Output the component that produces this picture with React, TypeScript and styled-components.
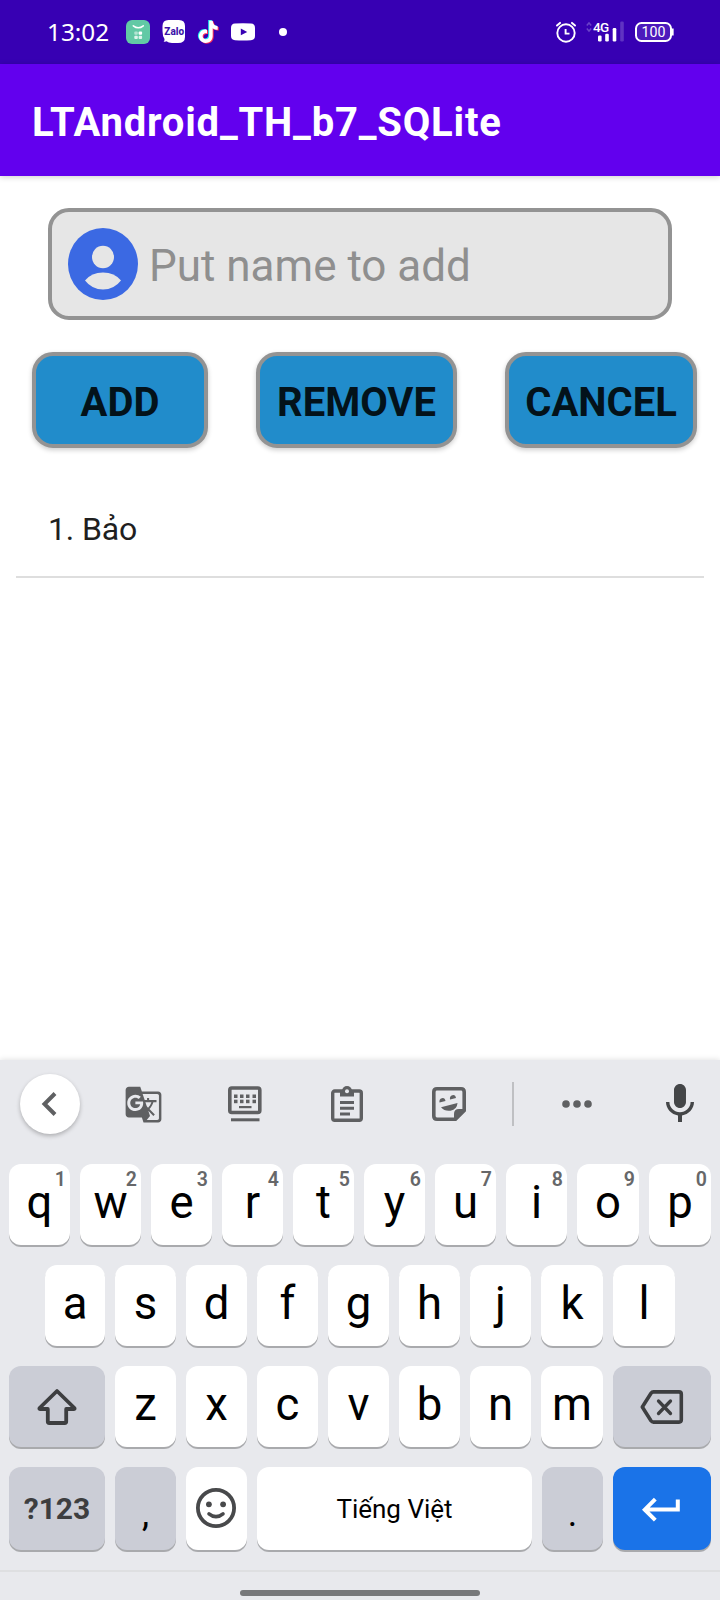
import React from "react";
import styled, { createGlobalStyle } from "styled-components";
import { MdGTranslate, MdMic } from "react-icons/md";

const GlobalStyle = createGlobalStyle`
  *, *::before, *::after { box-sizing: border-box; }
  body { margin: 0; background: #fff; font-family: Roboto, "Noto Sans", sans-serif; }
  button { font: inherit; border: 0; padding: 0; margin: 0; }
  svg { display: block; flex: none; overflow: visible; }
`;

const Screen = styled.div`
  width: 720px;
  height: 1600px;
  display: flex;
  flex-direction: column;
  background: #fff;
  overflow: hidden;
`;

/* ---------- status bar ---------- */

const StatusBar = styled.header`
  height: 64px;
  flex: none;
  display: flex;
  align-items: center;
  justify-content: space-between;
  padding: 0 45px 0 47px;
  background: #3700b3;
  color: #fff;
`;

const StatusGroup = styled.div`
  display: flex;
  align-items: center;
`;

const Clock = styled.span`
  width: 79px;
  font: 400 24.3px/32px "Noto Sans", sans-serif;
`;

const StatusItem = styled.span<{ $gap: number }>`
  margin-left: ${(p) => p.$gap}px;
`;

const StatusDot = styled.span`
  width: 8px;
  height: 8px;
  margin-left: 24px;
  border-radius: 50%;
  background: #fff;
`;

const Network = styled.span`
  display: flex;
  align-items: flex-start;
  width: 39px;
  height: 22px;
  margin-left: 10px;
`;

const NetworkLabel = styled.span`
  position: absolute;
  margin: -2px 0 0 7px;
  font: 500 13.5px/16px Roboto, sans-serif;
  letter-spacing: -0.7px;
`;

/* ---------- app bar ---------- */

const AppBar = styled.div`
  height: 112px;
  flex: none;
  display: flex;
  align-items: center;
  padding: 6px 32px 0;
  background: #6200ee;
  box-shadow: 0 1px 6px rgba(0, 0, 0, 0.2);
`;

const Title = styled.h1`
  margin: 0;
  color: #fff;
  font-size: 40px;
  font-weight: 700;
  line-height: 48px;
  letter-spacing: 0.79px;
`;

/* ---------- form ---------- */

const Content = styled.main`
  height: 884px;
  flex: none;
`;

const NameField = styled.label`
  height: 112px;
  margin: 32px 48px 0;
  display: flex;
  align-items: center;
  gap: 11px;
  padding: 0 16px;
  border: 4px solid #939393;
  border-radius: 21px;
  background: #e6e6e6;
`;

const Placeholder = styled.span`
  color: #8f8f8f;
  font-size: 44px;
  line-height: 52px;
  padding-top: 3px;
`;

const Actions = styled.div`
  display: flex;
  gap: 48px;
  padding: 32px 23px 0 32px;
`;

const ActionButton = styled.button<{ $width: number }>`
  width: ${(p) => p.$width}px;
  height: 96px;
  padding-top: 5px;
  border: 4px solid #939393;
  border-radius: 21px;
  background: #218ccb;
  color: #03121a;
  font-size: 40px;
  font-weight: 700;
  line-height: 48px;
  box-shadow: 0 2px 5px rgba(0, 0, 0, 0.2);
`;

const NameList = styled.ul`
  list-style: none;
  margin: 32px 16px 0;
  padding: 0;
`;

const NameItem = styled.li`
  height: 98px;
  padding: 0 32px;
  border-bottom: 2px solid #dedede;
  color: #1f1f1f;
  font-size: 32px;
  line-height: 98px;
  letter-spacing: -0.15px;
`;

/* ---------- keyboard ---------- */

const Keyboard = styled.section`
  flex: 1;
  background: #e8e9ed;
  box-shadow: 0 0 6px rgba(0, 0, 0, 0.14);
`;

const Toolbar = styled.div`
  height: 104px;
  display: flex;
  align-items: center;
  padding: 0 0 16px 20px;
  color: #5f6062;
`;

const BackCircle = styled.div`
  width: 60px;
  height: 60px;
  margin-right: 12px;
  display: grid;
  place-items: center;
  border-radius: 50%;
  background: #fff;
  box-shadow: 0 2px 4px rgba(0, 0, 0, 0.25);
`;

const ToolSlot = styled.div`
  width: 102px;
  display: grid;
  place-items: center;
`;

const ToolDivider = styled.div`
  width: 2px;
  height: 44px;
  margin: 0 12px;
  background: #bfc0c3;
`;

const MicSlot = styled.div`
  width: 80px;
  margin-left: 12px;
  display: grid;
  place-items: center;
  color: #444648;
`;

const KeyRow = styled.div<{ $indent?: number; $height?: number }>`
  display: flex;
  gap: 10px;
  height: ${(p) => p.$height ?? 101}px;
  padding-left: ${(p) => p.$indent ?? 9}px;
`;

const tones = {
  light: { bg: "#fff", fg: "#000" },
  dark: { bg: "#cbcdd6", fg: "#3d3e40" },
  accent: { bg: "#1a73e8", fg: "#fff" },
};

const KeyCap = styled.button<{ $width?: number; $height?: number; $tone?: keyof typeof tones }>`
  position: relative;
  flex: none;
  width: ${(p) => p.$width ?? 61}px;
  height: ${(p) => p.$height ?? 81}px;
  display: flex;
  justify-content: center;
  align-items: center;
  border-radius: 12px;
  background: ${(p) => tones[p.$tone ?? "light"].bg};
  color: ${(p) => tones[p.$tone ?? "light"].fg};
  box-shadow: 0 2px 0 #a9aaad;
`;

const Letter = styled.span`
  font-size: 45.5px;
  line-height: 54px;
  padding-bottom: 3px;
`;

const Hint = styled.span`
  position: absolute;
  top: 5px;
  right: 4px;
  color: #666769;
  font-size: 19.5px;
  font-weight: 600;
  line-height: 22px;
`;

const SymbolLabel = styled.span`
  font-size: 30px;
  font-weight: 700;
  line-height: 36px;
`;

const Punctuation = styled.span`
  color: #000;
  font-size: 36px;
  line-height: 42px;
  padding-top: 11px;
`;

const SpaceLabel = styled.span`
  font-size: 26px;
  line-height: 30px;
  padding-top: 1px;
`;

const EmojiSlot = styled.span`
  padding: 0 1px 2px 0;
`;

const NavigationBar = styled.footer`
  height: 30px;
  border-top: 2px solid #dedfe1;
  padding-top: 18px;
  display: flex;
  justify-content: center;
`;

const HomePill = styled.div`
  width: 240px;
  height: 6px;
  border-radius: 3px;
  background: #77787a;
`;

/* ---------- icons ---------- */

const ShopIcon = () => (
  <svg width="24" height="24" viewBox="0 0 24 24">
    <rect width="24" height="24" rx="6" fill="#62c9a5" />
    <path d="M7.300 5.800Q12.300 9.800 17.300 5.800" fill="none" stroke="#fff" strokeWidth="1.500" strokeLinecap="round" />
    <g fill="#fff">
      <rect x="8.300" y="11.500" width="3.500" height="3.200" rx="1" opacity=".5" />
      <rect x="12.600" y="11.500" width="3.500" height="3.200" rx="1" />
      <rect x="8.300" y="15.700" width="3.500" height="3.200" rx="1" opacity=".8" />
      <rect x="12.600" y="15.700" width="3.500" height="3.200" rx="1" opacity=".8" />
    </g>
  </svg>
);

const ZaloIcon = () => (
  <svg width="23" height="24" viewBox="0 0 23 24">
    <path
      d="M6.500 0H17Q23 0 23 6V17Q23 23 16 23H10Q6.500 23 4.500 21.300Q3.500 22 1.600 21.600Q2.800 20.500 2.500 19Q.5 16 .5 11V6Q.5 0 6.500 0Z"
      fill="#fff"
    />
    <text x="12.200" y="14.800" textAnchor="middle" fontFamily="Roboto, sans-serif" fontSize="10" fontWeight="800" fill="#3c14a8">
      Zalo
    </text>
  </svg>
);

const NOTE =
  "M12.500 1H16C16.300 4.300 18 6.300 21 6.600V10C19 10 17.400 9.500 16 8.500V16.300C16 24 6 25.500 3 19.800C.3 14.500 4.800 9 10.300 10V13.700C7.600 13 5.700 14.700 6 17C6.500 20.500 12.500 20.500 12.500 16Z";

const TikTokIcon = () => (
  <svg width="22" height="25" viewBox="0 0 22 25">
    <path d={NOTE} fill="#25f4ee" transform="translate(-1.300 -1)" />
    <path d={NOTE} fill="#fe2c55" transform="translate(.7 .4)" />
    <path d={NOTE} fill="#fff" transform="translate(-.3 -.3)" />
  </svg>
);

const VideoIcon = () => (
  <svg width="24" height="18" viewBox="0 0 24 18">
    <path d="M4 .6Q12 0 20 .6Q24 .8 24 5V13Q24 16.800 20 17.200Q12 17.800 4 17.200Q0 16.800 0 13V5Q0 .8 4 .6Z" fill="#fff" />
    <path d="M9.800 5.500V12.300L16.200 8.900Z" fill="#3700b3" />
  </svg>
);

const AlarmIcon = () => (
  <svg width="20" height="22" viewBox="0 0 20 22" fill="none" stroke="#fff">
    <circle cx="10" cy="12" r="8.700" strokeWidth="1.900" />
    <path d="M1 4.500L4 1.900M19 4.500L16 1.900" strokeWidth="2" strokeLinecap="round" />
    <path d="M9.600 8V12.600H13.500" strokeWidth="1.900" />
  </svg>
);

const SignalIcon = () => (
  <svg width="39" height="22" viewBox="0 0 39 22">
    <path d="M.8 4.500L3 2L5.200 4.500M.8 7.500L3 10L5.200 7.500" fill="none" stroke="#6a42c8" strokeWidth="1.500" />
    <g fill="#fff">
      <rect x="12" y="14.500" width="3.600" height="6" rx="1.200" />
      <rect x="19.200" y="12.800" width="3.600" height="7.700" rx="1.200" />
      <rect x="26.700" y="7" width="3.600" height="13.500" rx="1.200" />
      <rect x="34.200" y=".500" width="3.600" height="20" rx="1.200" opacity=".2" />
    </g>
  </svg>
);

const BatteryIcon = () => (
  <svg width="40" height="20" viewBox="0 0 40 20">
    <rect x="1" y="1" width="35" height="18" rx="5.500" fill="#4c1abc" stroke="#fff" strokeWidth="2" />
    <path d="M37.800 6.500V13.500" stroke="#fff" strokeWidth="1.700" />
    <text x="18.500" y="15" textAnchor="middle" fontFamily="Roboto, sans-serif" fontSize="14.200" fill="#fff">
      100
    </text>
  </svg>
);

const AvatarIcon = () => (
  <svg width="70" height="72" viewBox="0 0 70 72">
    <ellipse cx="35" cy="36" rx="35" ry="36" fill="#3b69e3" />
    <ellipse cx="35" cy="29" rx="11" ry="11.300" fill="#e6e6e6" />
    <path d="M17 52.500Q23.500 44.500 35 44.500T53 52.500Q46 61.500 35 61.500T17 52.500Z" fill="#e6e6e6" />
  </svg>
);

const ChevronIcon = () => (
  <svg width="20" height="26" viewBox="0 0 20 26" fill="none" stroke="currentColor" strokeWidth="4">
    <path d="M15 2.500L4.500 13L15 23.500" />
  </svg>
);

const KeyboardIcon = () => (
  <svg width="34" height="36" viewBox="0 0 34 36">
    <rect x="1.800" y="2" width="30" height="24.500" rx="2" fill="none" stroke="currentColor" strokeWidth="3.600" />
    <g fill="currentColor">
      {[6, 12, 18, 24.5].map((x) => (
        <React.Fragment key={x}>
          <rect x={x} y="8.500" width="3.500" height="3.500" />
          <rect x={x} y="13.700" width="3.500" height="3.500" />
        </React.Fragment>
      ))}
      <rect x="11" y="20" width="12.500" height="2.200" />
      <rect x="3" y="32.300" width="28.500" height="3" />
    </g>
  </svg>
);

const ClipboardIcon = () => (
  <svg width="32" height="36" viewBox="0 0 32 36">
    <rect x="1.700" y="5" width="28.600" height="29.300" rx="2" fill="none" stroke="currentColor" strokeWidth="3.400" />
    <rect x="9" y="4" width="14" height="6.500" fill="currentColor" />
    <circle cx="16" cy="5" r="5" fill="currentColor" />
    <circle cx="16" cy="5.300" r="2" fill="#e8e9ed" />
    <path d="M9 16.500H23M9 22.200H23M9 28H19" stroke="currentColor" strokeWidth="3" />
  </svg>
);

const StickerIcon = () => (
  <svg width="34" height="34" viewBox="0 0 34 34">
    <path
      d="M5 1.800H29Q32.200 1.800 32.200 5V23.500L23.500 32.200H5Q1.800 32.200 1.800 29V5Q1.800 1.800 5 1.800Z"
      fill="none"
      stroke="currentColor"
      strokeWidth="3.600"
    />
    <path d="M33.500 22H27Q22 22 22 27V33.500Z" fill="currentColor" />
    <path d="M7.500 15.500A3 3.600 0 0 1 13.500 14ZM18 12.500A3 3.600 0 0 1 24 11Z" fill="currentColor" />
    <path d="M9 20.300L25.500 16Q25 22.500 18.500 23.700Q12.500 24.500 9 20.300Z" fill="currentColor" />
  </svg>
);

const MoreIcon = () => (
  <svg width="30" height="8" viewBox="0 0 30 8" fill="currentColor">
    <circle cx="4" cy="4" r="3.800" />
    <circle cx="15" cy="4" r="3.800" />
    <circle cx="26" cy="4" r="3.800" />
  </svg>
);

const ShiftIcon = () => (
  <svg width="40" height="38" viewBox="0 0 40 38" fill="none" stroke="currentColor" strokeWidth="3.800" strokeLinejoin="round">
    <path d="M20 3L2.600 20Q2 21 3 21H10.800V33.500Q10.800 35 12.300 35H27.700Q29.200 35 29.200 33.500V21H37Q38 21 37.400 20Z" />
  </svg>
);

const BackspaceIcon = () => (
  <svg width="44" height="34" viewBox="0 0 44 34" fill="none" stroke="currentColor" strokeWidth="3.600" strokeLinejoin="round">
    <path d="M13.500 1.900H39Q41.300 1.900 41.300 4.200V29.800Q41.300 32.100 39 32.100H13.500Q12 32.100 11 30.700L2.300 17L11 3.300Q12 1.900 13.500 1.900Z" />
    <path d="M18.500 11L30.500 23.500M30.500 11L18.500 23.500" strokeLinecap="round" strokeWidth="3.300" />
  </svg>
);

const SmileIcon = () => (
  <svg width="40" height="40" viewBox="0 0 40 40">
    <circle cx="20" cy="20" r="18.100" fill="none" stroke="#48494b" strokeWidth="3.800" />
    <circle cx="12.900" cy="16.300" r="2.900" fill="#48494b" />
    <circle cx="27.100" cy="16.300" r="2.900" fill="#48494b" />
    <path d="M13 25.800Q20 31.600 27 25.800" fill="none" stroke="#48494b" strokeWidth="3.600" strokeLinecap="round" />
  </svg>
);

const EnterIcon = () => (
  <svg width="38" height="24" viewBox="0 0 38 24" fill="none" stroke="#fff" strokeWidth="4">
    <path d="M34.800 2.500V12.500H2M12.300 2.200L1.800 12.700L12.300 23.200" />
  </svg>
);

/* ---------- page ---------- */

const topRow = "qwertyuiop".split("").map((letter, i) => ({
  letter,
  hint: String((i + 1) % 10),
  width: i > 7 ? 62 : 61,
}));

const homeRow = "asdfghjkl".split("").map((letter, i) => ({
  letter,
  width: i === 0 ? 60 : i > 6 ? 62 : 61,
}));

const bottomRow = "zxcvbnm".split("").map((letter) => ({ letter, width: letter === "m" ? 62 : 61 }));

export default function App() {
  return (
    <Screen>
      <GlobalStyle />
      <StatusBar>
        <StatusGroup>
          <Clock>13:02</Clock>
          <ShopIcon />
          <StatusItem $gap={12}><ZaloIcon /></StatusItem>
          <StatusItem $gap={12}><TikTokIcon /></StatusItem>
          <StatusItem $gap={12}><VideoIcon /></StatusItem>
          <StatusDot />
        </StatusGroup>
        <StatusGroup>
          <AlarmIcon />
          <Network>
            <NetworkLabel>4G</NetworkLabel>
            <SignalIcon />
          </Network>
          <StatusItem $gap={10}><BatteryIcon /></StatusItem>
        </StatusGroup>
      </StatusBar>
      <AppBar>
        <Title>LTAndroid_TH_b7_SQLite</Title>
      </AppBar>
      <Content>
        <NameField>
          <AvatarIcon />
          <Placeholder>Put name to add</Placeholder>
        </NameField>
        <Actions>
          <ActionButton $width={176}>ADD</ActionButton>
          <ActionButton $width={201}>REMOVE</ActionButton>
          <ActionButton $width={192}>CANCEL</ActionButton>
        </Actions>
        <NameList>
          <NameItem>1. Bảo</NameItem>
        </NameList>
      </Content>
      <Keyboard>
        <Toolbar>
          <BackCircle><ChevronIcon /></BackCircle>
          <ToolSlot><MdGTranslate size={39} /></ToolSlot>
          <ToolSlot><KeyboardIcon /></ToolSlot>
          <ToolSlot><ClipboardIcon /></ToolSlot>
          <ToolSlot><StickerIcon /></ToolSlot>
          <ToolDivider />
          <ToolSlot><MoreIcon /></ToolSlot>
          <MicSlot><MdMic size={48} /></MicSlot>
        </Toolbar>
        <KeyRow>
          {topRow.map((k) => (
            <KeyCap key={k.letter} $width={k.width}>
              <Letter>{k.letter}</Letter>
              <Hint>{k.hint}</Hint>
            </KeyCap>
          ))}
        </KeyRow>
        <KeyRow $indent={45}>
          {homeRow.map((k) => (
            <KeyCap key={k.letter} $width={k.width}>
              <Letter>{k.letter}</Letter>
            </KeyCap>
          ))}
        </KeyRow>
        <KeyRow>
          <KeyCap $width={96} $tone="dark"><ShiftIcon /></KeyCap>
          {bottomRow.map((k) => (
            <KeyCap key={k.letter} $width={k.width}>
              <Letter>{k.letter}</Letter>
            </KeyCap>
          ))}
          <KeyCap $width={98} $tone="dark"><BackspaceIcon /></KeyCap>
        </KeyRow>
        <KeyRow $height={103}>
          <KeyCap $width={96} $height={83} $tone="dark"><SymbolLabel>?123</SymbolLabel></KeyCap>
          <KeyCap $height={83} $tone="dark"><Punctuation>,</Punctuation></KeyCap>
          <KeyCap $height={83}><EmojiSlot><SmileIcon /></EmojiSlot></KeyCap>
          <KeyCap $width={275} $height={83}><SpaceLabel>Tiếng Việt</SpaceLabel></KeyCap>
          <KeyCap $height={83} $tone="dark"><Punctuation>.</Punctuation></KeyCap>
          <KeyCap $width={98} $height={83} $tone="accent"><EnterIcon /></KeyCap>
        </KeyRow>
        <NavigationBar>
          <HomePill />
        </NavigationBar>
      </Keyboard>
    </Screen>
  );
}
